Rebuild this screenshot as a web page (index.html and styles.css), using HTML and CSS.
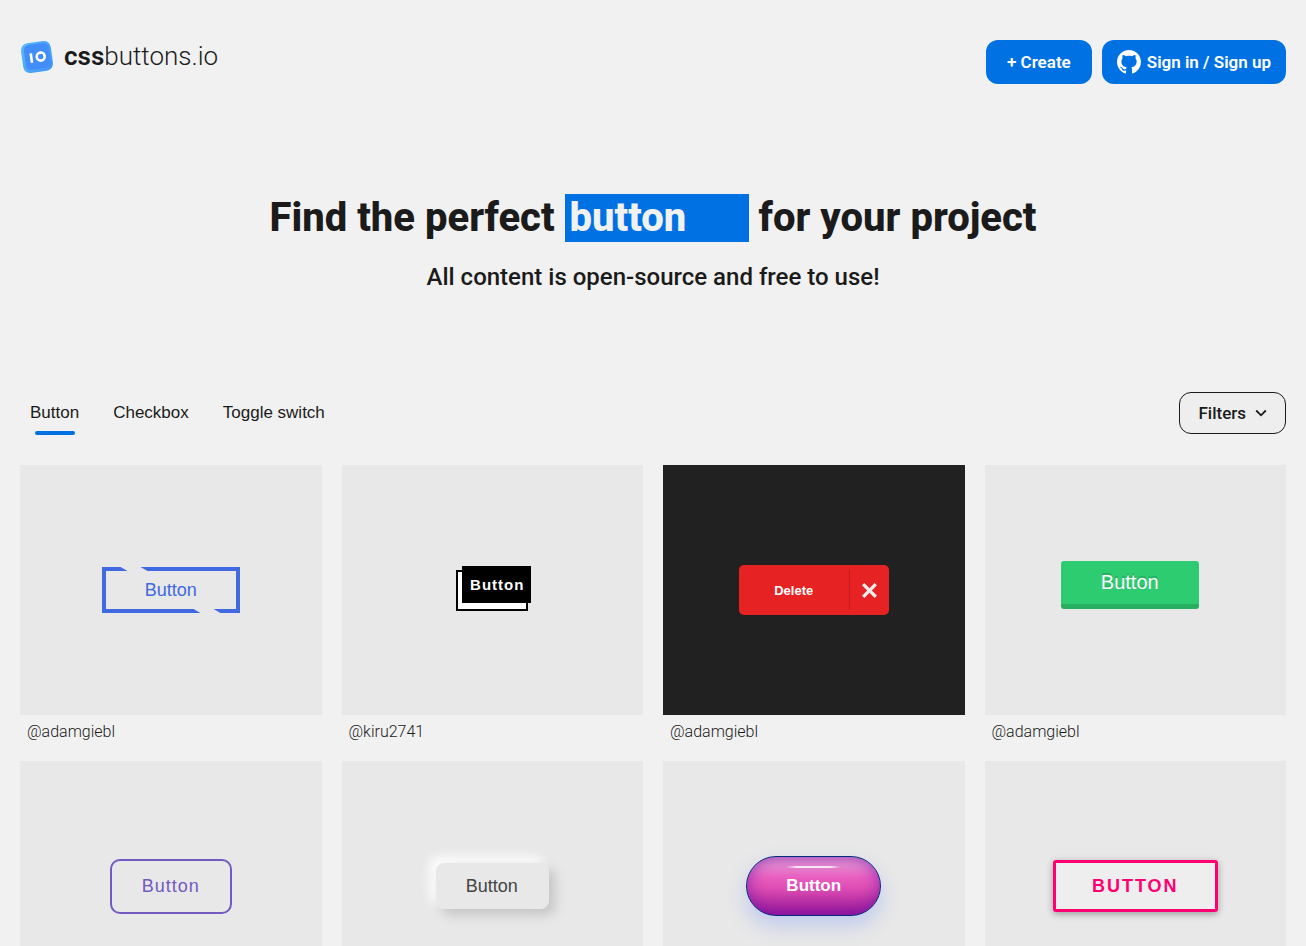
FILE: index.html
```html
<!DOCTYPE html>
<html lang="en">
<head>
<meta charset="utf-8">
<title>cssbuttons.io</title>
<link rel="stylesheet" href="styles.css">
</head>
<body>
<header class="header">
  <a class="logo" href="#">
    <svg class="logo-mark" viewBox="0 0 34 34" aria-hidden="true">
      <defs>
        <linearGradient id="edge" x1="0" y1="0" x2="1" y2="1"><stop offset="0" stop-color="#57b8fb"/><stop offset="1" stop-color="#3f97f8"/></linearGradient>
      </defs>
      <g transform="rotate(-8 17 17)">
        <rect x="2" y="2" width="30" height="30" rx="7" fill="url(#edge)"/>
        <rect x="5" y="4" width="25" height="25" rx="5" fill="#428df8"/>
        <path d="M11.3 12.500v9.500" stroke="#fff" stroke-width="2.6"/>
        <circle cx="20.7" cy="17.1" r="4" fill="none" stroke="#fff" stroke-width="2.600"/>
      </g>
    </svg>
    <span class="logo-text"><b>css</b>buttons.io</span>
  </a>
  <nav class="actions">
    <button class="primary create" type="button">+ Create</button>
    <button class="primary signin" type="button">
      <svg class="github" viewBox="0 0 16 16" aria-hidden="true"><path fill="currentColor" d="M8 0C3.58 0 0 3.58 0 8c0 3.54 2.29 6.53 5.47 7.59.4.07.55-.17.55-.38 0-.19-.01-.82-.01-1.49-2.01.37-2.53-.49-2.69-.94-.09-.23-.48-.94-.82-1.13-.28-.15-.68-.52-.01-.53.63-.01 1.08.58 1.23.82.72 1.21 1.87.87 2.33.66.07-.52.28-.87.51-1.07-1.78-.2-3.64-.89-3.64-3.95 0-.87.31-1.59.82-2.15-.08-.2-.36-1.02.08-2.12 0 0 .67-.21 2.2.82.64-.18 1.32-.27 2-.27s1.36.09 2 .27c1.53-1.04 2.2-.82 2.2-.82.44 1.1.16 1.92.08 2.12.51.56.82 1.27.82 2.15 0 3.07-1.87 3.75-3.65 3.95.29.25.54.73.54 1.48 0 1.07-.01 1.93-.01 2.2 0 .21.15.46.55.38A8.01 8.01 0 0 0 16 8c0-4.42-3.58-8-8-8z"/></svg>
      Sign in / Sign up
    </button>
  </nav>
</header>

<section class="hero">
  <h1 class="title">Find the perfect <span class="highlight">button</span> for your project</h1>
  <h2 class="subtitle">All content is open-source and free to use!</h2>
</section>

<main class="content">
  <div class="toolbar">
    <nav class="tabs">
      <a class="tab active" href="#">Button</a>
      <a class="tab" href="#">Checkbox</a>
      <a class="tab" href="#">Toggle switch</a>
    </nav>
    <button class="filters" type="button">Filters
      <svg class="chevron" viewBox="0 0 12 12" aria-hidden="true"><path d="M1.200 3.500 6 8.300 10.800 3.500" fill="none" stroke="currentColor" stroke-width="1.800"/></svg>
    </button>
  </div>

  <div class="grid">
    <article class="card">
      <div class="preview"><button class="demo royal" type="button">Button</button></div>
      <a class="author" href="#">@adamgiebl</a>
    </article>
    <article class="card">
      <div class="preview"><button class="demo stacked" type="button"><span class="stacked-top">Button</span></button></div>
      <a class="author" href="#">@kiru2741</a>
    </article>
    <article class="card">
      <div class="preview dark">
        <button class="demo delete" type="button">
          <span class="delete-text">Delete</span>
          <span class="delete-icon"><svg class="cross" viewBox="0 0 24 24" aria-hidden="true"><path fill="#eee" d="M24 20.188l-8.315-8.209 8.200-8.282-3.697-3.697-8.212 8.318-8.310-8.203-3.666 3.666 8.321 8.240-8.206 8.313 3.666 3.666 8.237-8.318 8.285 8.203z"/></svg></span>
        </button>
      </div>
      <a class="author" href="#">@adamgiebl</a>
    </article>
    <article class="card">
      <div class="preview"><button class="demo green" type="button">Button</button></div>
      <a class="author" href="#">@adamgiebl</a>
    </article>
    <article class="card">
      <div class="preview"><button class="demo outline" type="button">Button</button></div>
    </article>
    <article class="card">
      <div class="preview"><button class="demo soft" type="button">Button</button></div>
    </article>
    <article class="card">
      <div class="preview"><button class="demo glossy" type="button">Button</button></div>
    </article>
    <article class="card">
      <div class="preview"><button class="demo pink" type="button">BUTTON</button></div>
    </article>
  </div>
</main>
</body>
</html>
```

FILE: styles.css
```css
* {
  box-sizing: border-box;
}

body {
  margin: 0;
  background: #f1f1f1;
  color: #1b1b1b;
  font-family: Roboto, "Liberation Sans", sans-serif;
  font-size: 16px;
}

a {
  color: inherit;
  text-decoration: none;
}

button {
  margin: 0;
  border: 0;
  font-family: inherit;
  cursor: pointer;
}

.header {
  display: flex;
  justify-content: space-between;
  align-items: flex-start;
  padding: 40px 20px 0;
}

.logo {
  display: flex;
  align-items: flex-start;
  gap: 10px;
}

.logo-mark {
  width: 34px;
  height: 34px;
}

.logo-text {
  font-size: 26px;
  line-height: 32px;
  font-weight: 300;
}

.logo-text b {
  font-weight: 600;
}

.actions {
  display: flex;
  gap: 10px;
}

.primary {
  display: flex;
  align-items: center;
  gap: 6px;
  height: 44px;
  border-radius: 12px;
  background: #0071e3;
  color: #fff;
  font-size: 17px;
  font-weight: 600;
}

.create {
  padding: 0 21px;
}

.signin {
  padding: 0 15px;
}

.github {
  width: 24px;
  height: 24px;
}

.hero {
  padding: 110px 20px 100px;
  text-align: center;
}

.title {
  margin: 0;
  font-size: 40px;
  line-height: 48px;
  font-weight: 800;
}

.highlight {
  display: inline-block;
  width: 184px;
  padding: 0 5px;
  background: #0071e3;
  color: #f1f1f1;
  text-align: left;
}

.subtitle {
  margin: 20px 0 0;
  font-size: 24px;
  line-height: 30px;
  font-weight: 500;
}

.content {
  padding: 0 20px 20px;
}

.toolbar {
  display: flex;
  justify-content: space-between;
  align-items: center;
}

.tabs {
  display: flex;
  gap: 14px;
}

.tab {
  display: flex;
  flex-direction: column;
  padding: 0 10px;
  font: 17px/42px "Liberation Sans", Arial, sans-serif;
}

.active::after {
  content: "";
  width: 40px;
  height: 4px;
  margin: -3px 0 -1px 5px;
  border-radius: 2px;
  background: #0071e3;
}

.filters {
  display: flex;
  align-items: center;
  gap: 9px;
  height: 42px;
  padding: 0 18px;
  border: 1px solid #1b1b1b;
  border-radius: 12px;
  background: #eee;
  color: #1b1b1b;
  font-size: 17px;
  font-weight: 500;
}

.chevron {
  width: 12px;
  height: 12px;
}

.grid {
  display: grid;
  grid-template-columns: repeat(4, 1fr);
  gap: 12px 20px;
  margin-top: 31px;
}

.preview {
  display: flex;
  align-items: center;
  justify-content: center;
  height: 250px;
  background: #e8e8e8;
}

.dark {
  background: #212121;
}

.author {
  display: block;
  padding: 0 7px;
  font-weight: 300;
  line-height: 34px;
}

.demo {
  font-family: "Liberation Sans", Arial, sans-serif;
  font-size: 18px;
}

.royal {
  position: relative;
  height: 46px;
  padding: 0 39px;
  border: 4px solid #4169e1;
  background: none;
  color: #4169e1;
}

.royal::before,
.royal::after {
  content: "";
  position: absolute;
  width: 20px;
  height: 4px;
  background: #e8e8e8;
  transform: skewX(60deg);
}

.royal::before {
  top: -4px;
  left: 18px;
}

.royal::after {
  right: 19px;
  bottom: -4px;
}

.stacked {
  padding: 0;
  border: 2px solid #000;
  background: #fff;
  font-size: 15px;
  font-weight: 700;
  letter-spacing: 1px;
}

.stacked-top {
  display: block;
  margin: -6px -5px 6px 4px;
  padding: 0 7px 0 8px;
  background: #000;
  color: #fff;
  line-height: 37px;
}

.delete {
  display: flex;
  align-items: center;
  width: 150px;
  height: 50px;
  padding: 0;
  border-radius: 5px;
  background: #e62222;
  color: #fff;
  font-size: 13px;
  font-weight: 700;
}

.delete-text {
  flex: 1;
}

.delete-icon {
  display: flex;
  align-items: center;
  justify-content: center;
  width: 40px;
  height: 40px;
  border-left: 1px solid #c41b1b;
}

.cross {
  width: 15px;
  height: 15px;
}

.green {
  height: 48px;
  margin: 0 11px 10px 0;
  padding: 0 40px;
  border-bottom: 5px solid #27ae60;
  border-radius: 3px;
  background: #2ecc71;
  color: #fff;
  font-size: 20px;
  text-shadow: 0 -2px #27ae60;
}

.outline {
  height: 55px;
  padding: 0 30px;
  border: 2px solid #725ac1;
  border-radius: 10px;
  background: none;
  color: #725ac1;
  letter-spacing: 1px;
}

.soft {
  height: 46px;
  padding: 0 31px 0 30px;
  border-radius: 8px;
  background: #e8e8e8;
  color: #444;
  box-shadow: 6px 6px 12px #c5c5c5, -6px -6px 12px #fff;
}

.glossy {
  position: relative;
  height: 60px;
  padding: 0 39px;
  border: 1px solid #002b80;
  border-radius: 30px;
  background: linear-gradient(#e292d0 0%, #e98bcf 15%, #ea5fc0 35%, #dc4bb3 55%, #b52ea2 80%, #9b159b 100%);
  box-shadow: inset 0 0 16px #6a14a8b0, 0 10px 20px #4d79ff40;
  color: #fff;
  font-size: 17px;
  font-weight: 700;
}

.glossy::before {
  content: "";
  position: absolute;
  top: 9px;
  left: 39px;
  right: 39px;
  height: 2px;
  background: linear-gradient(90deg, #fff0, #fffc 20%, #fffc 80%, #fff0);
}

.pink {
  height: 52px;
  padding: 0 36px;
  border: 3px solid #ff0072;
  border-radius: 3px;
  background: #eee;
  color: #ff0072;
  font-weight: 700;
  letter-spacing: 2px;
  box-shadow: 0 2px 7px #0005;
}
```
